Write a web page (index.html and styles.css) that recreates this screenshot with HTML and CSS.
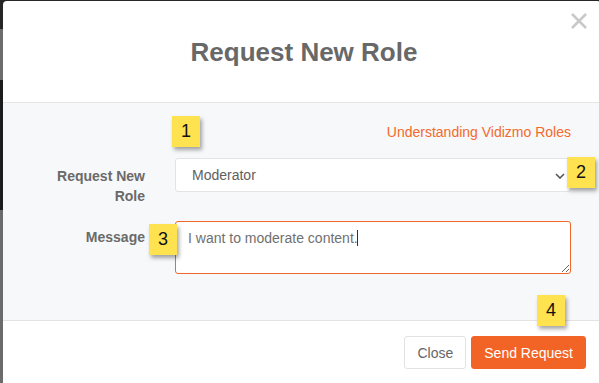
FILE: index.html
```html
<!DOCTYPE html>
<html lang="en">
<head>
    <meta charset="UTF-8">
    <meta name="viewport" content="width=device-width, initial-scale=1.0">
    <title>Request New Role</title>
    <link rel="stylesheet" href="styles.css">
</head>
<body>
    <div class="modal">
        <div class="modal-header">
            <h1>Request New Role</h1>
            <button class="close-x" aria-label="Close">
                <svg width="18" height="18" viewBox="0 0 18 18">
                    <path d="M2 2 L16 16 M16 2 L2 16" stroke="#c9c9c9" stroke-width="2.6" stroke-linecap="butt"/>
                </svg>
            </button>
        </div>

        <div class="modal-body">
            <div class="link-row">
                <a href="#" class="roles-link">Understanding Vidizmo Roles</a>
            </div>

            <div class="form-row">
                <label class="form-label" for="role">Request New<br>Role</label>
                <div class="control">
                    <select id="role" class="select">
                        <option>Moderator</option>
                    </select>
                    <svg class="chevron" width="10" height="6" viewBox="0 0 10 6">
                        <path d="M1 1 L5 5 L9 1" fill="none" stroke="#555" stroke-width="1.6"/>
                    </svg>
                </div>
            </div>

            <div class="form-row">
                <label class="form-label label-msg" for="message">Message</label>
                <div class="control">
                    <textarea id="message" class="textarea">I want to moderate content.</textarea>
                    <span class="caret"></span>
                </div>
            </div>

            <span class="badge badge-1">1</span>
            <span class="badge badge-2">2</span>
            <span class="badge badge-3">3</span>
        </div>

        <div class="modal-footer">
            <span class="badge badge-4">4</span>
            <button class="btn btn-default">Close</button>
            <button class="btn btn-primary">Send Request</button>
        </div>
    </div>
</body>
</html>
```

FILE: styles.css
```css
* {
    box-sizing: border-box;
    font-family: 'Liberation Sans', Arial, sans-serif;
}

body {
    margin: 0;
    padding: 1px 0 0 3px;
    height: 383px;
    overflow: hidden;
    background: linear-gradient(to bottom,
        #262626 0, #262626 29px,
        #6c6c6c 29px, #6c6c6c 80px,
        #1c1c1c 80px, #1c1c1c 210px,
        #6b6b6b 210px);
}

.modal {
    width: 598px;
    background-color: #fff;
    border-radius: 4px 4px 0 0;
    min-height: 400px;
}

.modal-header {
    position: relative;
    height: 102px;
    border-bottom: 1px solid #e5e5e5;
    display: flex;
    align-items: center;
    justify-content: center;
}

.modal-header h1 {
    margin: 0;
    padding: 2px 0 0 4px;
    font-size: 26px;
    font-weight: bold;
    color: #686868;
}

.close-x {
    position: absolute;
    top: 11px;
    right: 13px;
    padding: 0;
    border: none;
    background: none;
    line-height: 0;
}

.modal-body {
    position: relative;
    background-color: #f7f8fa;
    padding: 19px 30px 46px 0;
    border-bottom: 1px solid #e3e3e3;
}

.link-row {
    text-align: right;
    line-height: 20px;
    height: 20px;
    margin-bottom: 16px;
}

.roles-link {
    font-size: 14px;
    color: #f26a2c;
    text-decoration: none;
}

.form-row {
    display: grid;
    grid-template-columns: 142px 396px;
    column-gap: 30px;
    margin-bottom: 15px;
}

.form-row:last-of-type {
    margin-bottom: 0;
}

.form-label {
    text-align: right;
    font-size: 14px;
    font-weight: bold;
    line-height: 20px;
    color: #6a6a6a;
    padding-top: 8px;
}

.label-msg {
    padding-top: 6px;
}

.control {
    position: relative;
}

.select {
    display: block;
    width: 100%;
    height: 34px;
    padding: 0 16px;
    border: 1px solid #e4e4e4;
    border-radius: 3px;
    background-color: #fff;
    font-size: 14px;
    color: #606060;
    appearance: none;
    -webkit-appearance: none;
}

.chevron {
    position: absolute;
    right: 6px;
    top: 15px;
}

.textarea {
    display: block;
    width: 100%;
    height: 53px;
    padding: 7px 12px;
    border: 1px solid #f0682b;
    border-radius: 3px;
    background-color: #fff;
    font-size: 14px;
    line-height: 18px;
    color: #707070;
    outline: none;
}

.caret {
    position: absolute;
    left: 182px;
    top: 9px;
    width: 1px;
    height: 16px;
    background-color: #333;
}

.badge {
    position: absolute;
    width: 28px;
    height: 31px;
    background-color: #ffe24f;
    box-shadow: 2px 3px 4px rgba(0, 0, 0, 0.35);
    font-size: 18px;
    line-height: 31px;
    text-align: center;
    color: #111;
}

.badge-1 { left: 169px; top: 13px; }
.badge-2 { left: 564px; top: 54px; }
.badge-3 { left: 146px; top: 121px; }
.badge-4 { left: 534px; top: -26px; }

.modal-footer {
    position: relative;
    display: flex;
    justify-content: flex-end;
    gap: 5px;
    padding: 15px 15px 0 0;
}

.btn {
    height: 33px;
    padding: 0 12px;
    border-radius: 3px;
    font-size: 14px;
    cursor: pointer;
}

.btn-default {
    background-color: #fff;
    border: 1px solid #e2e2e2;
    color: #666;
}

.btn-primary {
    background-color: #f26426;
    border: 1px solid #f26426;
    color: #fff;
}
```
